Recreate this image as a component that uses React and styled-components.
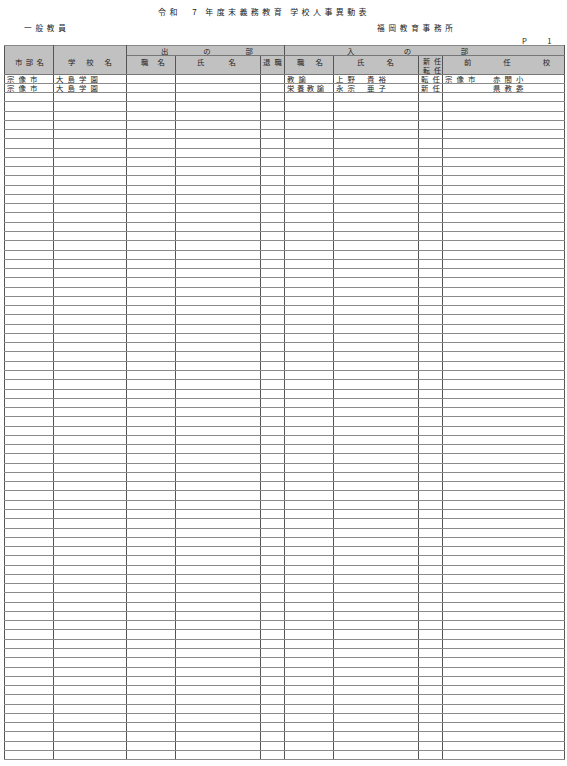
import React from 'react';
import styled, { createGlobalStyle } from 'styled-components';

const GlobalStyle = createGlobalStyle`
  html, body {
    margin: 0;
    padding: 0;
    background: #fff;
  }
  body {
    font-family: "Noto Sans CJK JP", "Noto Sans", sans-serif;
    color: #222;
  }
`;

const Page = styled.div`
  width: 567px;
  height: 766px;
  box-sizing: border-box;
  padding: 4px 3px 0 4px;
  display: flex;
  flex-direction: column;
`;

const Title = styled.div`
  height: 15px;
  font-size: 8px;
  line-height: 15px;
  letter-spacing: 3.4px;
  padding-left: 154px;
  white-space: pre;
`;

const InfoRow = styled.div`
  display: flex;
  align-items: center;
  height: 17px;
  font-size: 7.6px;
  letter-spacing: 3.8px;
  white-space: pre;
`;

const Category = styled.span`
  margin-left: 20px;
  width: 353px;
`;

const Office = styled.span``;

const PageNo = styled.div`
  height: 9px;
  font-size: 7.6px;
  line-height: 9px;
  padding-left: 518px;
  white-space: pre;
`;

const Table = styled.table`
  border-collapse: collapse;
  table-layout: fixed;
  width: 560px;
  font-size: 7.4px;
`;

const dither = `
  background-color: #cfcfcf;
  background-image: repeating-conic-gradient(#9c9c9c 0 25%, #e6e6e6 0 50%);
  background-size: 2px 2px;
`;

const Th = styled.th`
  ${dither}
  font-weight: normal;
  padding: 0;
  border-left: 1px solid #555;
  border-right: 1px solid #555;
  border-top: 1px solid #888;
  border-bottom: 1px solid #777;
  height: ${(p) => p.$h || 9}px;
  vertical-align: ${(p) => p.$va || 'middle'};
  line-height: 8px;
  overflow: hidden;
`;

const Spread = styled.div`
  display: flex;
  justify-content: space-between;
  padding: ${(p) => p.$pad || '0 4px'};
  padding-top: ${(p) => p.$top || 0}px;
`;

const Stack = styled.div`
  display: flex;
  flex-direction: column;
  gap: 0.5px;
  padding-top: 1px;
  font-size: 7px;
  span {
    display: flex;
    justify-content: space-between;
    padding: 0 2px;
    line-height: 8px;
  }
`;

const Td = styled.td`
  padding: 0 0 0 2px;
  height: 8.28px;
  border-left: 1px solid #555;
  border-right: 1px solid #555;
  border-bottom: 1px solid #8a8a8a;
  line-height: 8px;
  white-space: pre;
  overflow: hidden;
  letter-spacing: ${(p) => p.$ls ?? 4.1}px;
`;

const Given = styled.span`
  margin-left: ${(p) => p.$gap}px;
`;

const Prev = styled.span`
  display: inline-block;
  width: 48px;
`;

const cols = [49, 73, 49, 85, 24, 49, 85, 24, 122];

const people = [
  { city: '宗像市', school: '大島学園', post: '教諭', postLs: 4.1, fam: '上野', given: '貴裕', kind: '転任', prevCity: '宗像市', prev: '赤間小' },
  { city: '宗像市', school: '大島学園', post: '栄養教諭', postLs: 2.5, fam: '永宗', given: '亜子', kind: '新任', prevCity: '', prev: '県教委' },
];

const ROWS = 74;

const chars = (s) => s.split('').map((c, i) => <span key={i}>{c}</span>);

export default function App() {
  const empty = Array.from({ length: ROWS - people.length });
  return (
    <>
      <GlobalStyle />
      <Page>
        <Title>令和　7 年度末義務教育 学校人事異動表</Title>
        <InfoRow>
          <Category>一般教員</Category>
          <Office>福岡教育事務所</Office>
        </InfoRow>
        <PageNo>P            1</PageNo>
        <Table>
          <colgroup>
            {cols.map((w, i) => <col key={i} style={{ width: w }} />)}
          </colgroup>
          <thead>
            <tr>
              <Th rowSpan={2} $va="top"><Spread $pad="0 9px 0 10px" $top={12}>{chars('市部名')}</Spread></Th>
              <Th rowSpan={2} $va="top"><Spread $pad="0 14px 0 14px" $top={12}>{chars('学校名')}</Spread></Th>
              <Th colSpan={3} $h={9}><Spread $pad="0 31px 0 34px">{chars('出の部')}</Spread></Th>
              <Th colSpan={4} $h={9}><Spread $pad="0 96px 0 62px">{chars('入の部')}</Spread></Th>
            </tr>
            <tr>
              <Th $h={17} $va="top"><Spread $pad="0 10px 0 14px" $top={2}>{chars('職名')}</Spread></Th>
              <Th $h={17} $va="top"><Spread $pad="0 24px 0 21px" $top={2}>{chars('氏名')}</Spread></Th>
              <Th $h={17} $va="top"><Spread $pad="0 2px 0 2px" $top={2}>{chars('退職')}</Spread></Th>
              <Th $h={17} $va="top"><Spread $pad="0 10px 0 12px" $top={2}>{chars('職名')}</Spread></Th>
              <Th $h={17} $va="top"><Spread $pad="0 24px 0 23px" $top={2}>{chars('氏名')}</Spread></Th>
              <Th $h={17} $va="top"><Stack><span>{chars('新任')}</span><span>{chars('転任')}</span></Stack></Th>
              <Th $h={17} $va="top"><Spread $pad="0 14px 0 21px" $top={2}>{chars('前任校')}</Spread></Th>
            </tr>
          </thead>
          <tbody>
            {people.map((p, i) => (
              <tr key={i}>
                <Td>{p.city}</Td>
                <Td>{p.school}</Td>
                <Td />
                <Td />
                <Td />
                <Td $ls={p.postLs}>{p.post}</Td>
                <Td>{p.fam}<Given $gap={8}>{p.given}</Given></Td>
                <Td>{p.kind}</Td>
                <Td><Prev>{p.prevCity}</Prev>{p.prev}</Td>
              </tr>
            ))}
            {empty.map((_, i) => (
              <tr key={`e${i}`}>
                {cols.map((_, j) => <Td key={j} />)}
              </tr>
            ))}
          </tbody>
        </Table>
      </Page>
    </>
  );
}
